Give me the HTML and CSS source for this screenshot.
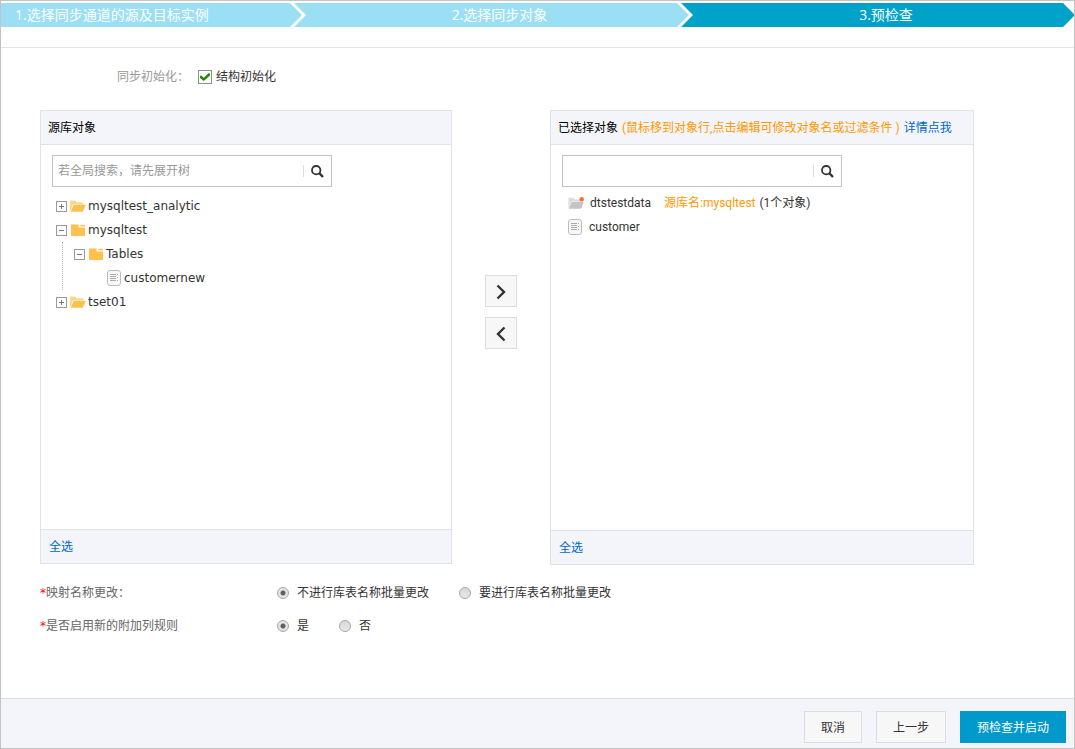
FILE: index.html
```html
<!DOCTYPE html>
<html lang="zh-CN">
<head>
<meta charset="utf-8">
<title>预检查</title>
<meta name="viewport" content="width=device-width, initial-scale=1">
<link rel="stylesheet" href="styles.css">
</head>
<body>
<svg class="sprite" aria-hidden="true">
  <symbol id="i-search" viewBox="0 0 13 13">
    <circle cx="5.2" cy="5.2" r="4.2" fill="none" stroke="#333" stroke-width="1.8"/>
    <path d="M8.2 8.2L12 12" stroke="#333" stroke-width="2.4"/>
  </symbol>
  <symbol id="i-open" viewBox="0 0 16 12">
    <path d="M0 11V1.6Q0 0.6 1 0.6H5L6.6 2.2H12.4Q13.2 2.2 13.2 3V4.2H4.2Q3 4.2 2.5 5.2L0.3 11.2Z" fill="#ffd58a"/>
    <path d="M0.6 11.8L3.4 5.4Q3.7 4.8 4.4 4.8H15.8L13.2 11Q12.9 11.8 12 11.8Z" fill="#ffc04d"/>
  </symbol>
  <symbol id="i-closed" viewBox="0 0 16 12">
    <path d="M1 0.4H8.6V3.6H15V12H1Z" fill="#ffc04d"/>
    <path d="M10.4 0.8H15V2.4H10.4Z" fill="#ffc04d"/>
  </symbol>
  <symbol id="i-db" viewBox="0 0 17 12">
    <path d="M0.4 11V1.6Q0.4 0.8 1.2 0.8H5.4L7 2.4H13.6V4.2H4.2Q3.3 4.2 3 5L0.8 11Z" fill="#dcdcdc"/>
    <path d="M0.8 11.8L3.4 5.4Q3.7 4.8 4.4 4.8H15.8L13.4 11Q13 11.8 12.2 11.8Z" fill="#c4c4c4"/>
    <circle cx="13.7" cy="2.2" r="2.2" fill="#ff6a33"/>
  </symbol>
  <symbol id="i-doc" viewBox="0 0 14 16">
    <rect x="0.5" y="0.5" width="13" height="15" rx="2.5" fill="#f7f7f7" stroke="#bcbcbc"/>
    <path d="M3 4.5H9M3 6.5H9M3 8.5H9M3 10.5H9M10 4.5H11M10 7.5H11M10 10.5H11" stroke="#aaa"/>
  </symbol>
</svg>
<div class="page">
  <header class="header">
    <ol class="steps">
      <li class="step step-first"><span class="step-text">1.选择同步通道的源及目标实例</span>
        <svg class="step-arrow" viewBox="0 0 16 24"><path d="M0 0H4L16 12L4 24H0L12 12Z" fill="#fff"/></svg></li>
      <li class="step"><span class="step-text">2.选择同步对象</span>
        <svg class="step-arrow" viewBox="0 0 16 24"><path d="M0 0H16V24H0Z" fill="#00a2ca"/><path d="M0 0H4L16 12L4 24H0Z" fill="#fff"/><path d="M0 0L12 12L0 24Z" fill="#9bdff5"/></svg></li>
      <li class="step step-current" aria-current="step"><span class="step-text">3.预检查</span>
        <svg class="step-end" viewBox="0 0 11 24"><path d="M0 0L11 11V0ZM0 24L11 13V24Z" fill="#fff"/></svg></li>
    </ol>
  </header>

  <main class="main">
    <div class="init">
      <span class="init-label">同步初始化：</span>
      <label class="choice check-choice"><input class="check" type="checkbox" checked>结构初始化</label>
    </div>

    <div class="transfer">
      <section class="panel">
        <h2 class="panel-head">源库对象</h2>
        <div class="panel-body">
          <div class="search">
            <input class="search-input" type="text" placeholder="若全局搜索，请先展开树" aria-label="搜索源库对象">
            <button class="search-btn" type="button" aria-label="搜索"><svg class="search-icon"><use href="#i-search"/></svg></button>
          </div>
          <ul class="tree">
            <li><div class="node"><button class="toggle plus" type="button" aria-label="展开"></button><svg class="folder"><use href="#i-open"/></svg><span>mysqltest_analytic</span></div></li>
            <li><div class="node"><button class="toggle" type="button" aria-label="收起"></button><svg class="folder"><use href="#i-closed"/></svg><span>mysqltest</span></div>
              <ul class="branch branch-line">
                <li><div class="node"><button class="toggle" type="button" aria-label="收起"></button><svg class="folder"><use href="#i-closed"/></svg><span>Tables</span></div>
                  <ul class="branch">
                    <li><div class="node"><span class="toggle-gap"></span><svg class="doc"><use href="#i-doc"/></svg><span>customernew</span></div></li>
                  </ul>
                </li>
              </ul>
            </li>
            <li><div class="node"><button class="toggle plus" type="button" aria-label="展开"></button><svg class="folder"><use href="#i-open"/></svg><span>tset01</span></div></li>
          </ul>
        </div>
        <div class="panel-foot"><a class="link" href="#">全选</a></div>
      </section>

      <div class="moves">
        <button class="move" type="button" aria-label="添加"><svg class="move-icon" viewBox="0 0 10 16"><path d="M1.5 1.5L8 8L1.5 14.5" fill="none" stroke="#333" stroke-width="2.4"/></svg></button>
        <button class="move" type="button" aria-label="移除"><svg class="move-icon" viewBox="0 0 10 16"><path d="M8.5 1.5L2 8L8.5 14.5" fill="none" stroke="#333" stroke-width="2.4"/></svg></button>
      </div>

      <section class="panel">
        <h2 class="panel-head"><span>已选择对象</span><span class="orange">(鼠标移到对象行,点击编辑可修改对象名或过滤条件 )</span><a class="link" href="#">详情点我</a></h2>
        <div class="panel-body body-selected">
          <div class="search">
            <input class="search-input" type="text" aria-label="搜索已选择对象">
            <button class="search-btn" type="button" aria-label="搜索"><svg class="search-icon"><use href="#i-search"/></svg></button>
          </div>
          <ul class="selected">
            <li class="item"><svg class="db"><use href="#i-db"/></svg><span class="item-name">dtstestdata</span><span class="orange item-source">源库名:mysqltest</span><span>(1个对象)</span></li>
            <li class="item"><svg class="doc"><use href="#i-doc"/></svg><span class="item-name">customer</span></li>
          </ul>
        </div>
        <div class="panel-foot"><a class="link" href="#">全选</a></div>
      </section>
    </div>

    <div class="options">
      <div class="option" role="radiogroup" aria-labelledby="l-map">
        <span class="option-label" id="l-map"><span class="star">*</span>映射名称更改：</span>
        <label class="choice"><input class="radio" type="radio" name="map" checked>不进行库表名称批量更改</label>
        <label class="choice"><input class="radio" type="radio" name="map">要进行库表名称批量更改</label>
      </div>
      <div class="option" role="radiogroup" aria-labelledby="l-rule">
        <span class="option-label" id="l-rule"><span class="star">*</span>是否启用新的附加列规则</span>
        <label class="choice"><input class="radio" type="radio" name="rule" checked>是</label>
        <label class="choice"><input class="radio" type="radio" name="rule">否</label>
      </div>
    </div>
  </main>

  <footer class="footer">
    <button class="btn" type="button">取消</button>
    <button class="btn" type="button">上一步</button>
    <button class="btn btn-primary" type="button">预检查并启动</button>
  </footer>
</div>
</body>
</html>
```

FILE: styles.css
```css
* { box-sizing: border-box; }
body {
  margin: 0;
  background: #fff;
  color: #333;
  font: 12px/18px Roboto, "Noto Sans CJK SC", sans-serif;
}
ul, ol { list-style: none; margin: 0; padding: 0; }
button, input { font: inherit; color: inherit; margin: 0; }
button { padding: 0; cursor: pointer; }
svg { display: block; flex: none; }
.sprite { position: absolute; width: 0; height: 0; }

.page {
  display: flex;
  flex-direction: column;
  min-height: 100vh;
  border: 1px solid #c3c3c3;
}

/* Steps */
.header { padding: 2px 0 20px; border-bottom: 1px solid #e5e5e5; }
.steps {
  display: flex;
  color: #fff;
  font-family: "Open Sans", "Noto Sans CJK SC", sans-serif;
  font-size: 14px;
  line-height: 24px;
}
.step { display: flex; flex: 387 1 0; background: #9bdff5; }
.step-text { flex: 1; padding-left: 16px; text-align: center; white-space: nowrap; }
.step-first { flex-grow: 305; }
.step-first .step-text { padding-left: 14px; text-align: left; }
.step-current { flex-grow: 381; background: #00a2ca; }
.step-arrow { width: 16px; height: 24px; }
.step-end { width: 11px; height: 24px; }

.main { flex: 1; padding: 20px 100px 20px 39px; }

.choice { display: flex; align-items: center; }
.init { display: flex; align-items: center; padding-left: 77px; margin-bottom: 24px; }
.init-label { width: 81px; color: #999; white-space: nowrap; }
.check {
  appearance: none;
  display: grid;
  place-items: center;
  width: 14px;
  height: 14px;
  margin-right: 4px;
  border: 1px solid #8e8f8f;
  background: #fff;
}
.check:checked::before {
  content: "";
  width: 10px;
  height: 8px;
  background: #218a00;
  clip-path: polygon(0 38%, 12% 30%, 38% 58%, 88% 0, 100% 8%, 100% 32%, 38% 100%, 0 62%);
}

/* Transfer panels */
.transfer {
  display: grid;
  grid-template-columns: 412fr 98px 424fr;
  align-items: start;
}
.panel { border: 1px solid #dfe3e8; min-width: 0; }
.panel-head, .panel-foot {
  margin: 0;
  padding: 8px 8px 7px;
  background: #f4f5fa;
  font-size: 12px;
  font-weight: 400;
  color: #000;
}
.panel-head {
  display: flex;
  gap: 4px;
  padding-left: 7px;
  border-bottom: 1px solid #dfe3e8;
  white-space: nowrap;
}
.panel-foot { border-top: 1px solid #dfe3e8; }
.panel-body { min-height: 384px; padding: 10px 11px; }
.body-selected { min-height: 385px; }
.orange { color: #ff9900; }
.link { color: #0066cc; text-decoration: none; }

.search {
  display: flex;
  align-items: center;
  width: 280px;
  max-width: 100%;
  height: 32px;
  border: 1px solid #c3c3c3;
}
.search-input {
  flex: 1;
  min-width: 0;
  padding: 0 5px;
  border: 0;
  outline: 0;
  background: none;
}
.search-input::placeholder { color: #999; opacity: 1; }
.search-btn {
  display: grid;
  place-items: center;
  width: 28px;
  height: 12px;
  border: 0;
  border-left: 1px solid #ddd;
  background: none;
}
.search-icon { width: 13px; height: 13px; }

.tree { padding: 7px 4px; font-family: "DejaVu Sans", sans-serif; }
.node { display: flex; align-items: center; height: 24px; }
.toggle {
  display: grid;
  place-items: center;
  width: 11px;
  height: 11px;
  margin-right: 3px;
  border: 1px solid #999;
  background: linear-gradient(#777, #777) center / 5px 1px no-repeat;
}
.plus {
  background:
    linear-gradient(#777, #777) center / 5px 1px no-repeat,
    linear-gradient(#777, #777) center / 1px 5px no-repeat;
}
.toggle-gap { width: 15px; }
.folder { width: 16px; height: 12px; margin-right: 2px; }
.doc { width: 14px; height: 16px; margin-right: 3px; }
.branch { margin-left: 18px; }
.branch-line { margin-left: 6px; padding-left: 11px; border-left: 1px dotted #bbb; }

.moves { display: grid; justify-content: center; gap: 10px; padding-top: 165px; }
.move {
  display: grid;
  place-items: center;
  width: 32px;
  height: 32px;
  padding-top: 2px;
  border: 1px solid #ddd;
  background: #f7f7f7;
}
.move-icon { width: 10px; height: 16px; }

.selected { padding: 4px 6px; }
.item { display: flex; align-items: center; height: 24px; white-space: nowrap; }
.item .doc { margin-right: 7px; }
.db { width: 17px; height: 12px; margin-right: 5px; }
.item-name { margin-right: 13px; }
.item-source { margin-right: 4px; }

/* Options */
.options { display: grid; gap: 15px; margin-top: 19px; }
.option { display: flex; align-items: center; height: 18px; }
.option .choice { margin-right: 30px; }
.option-label { width: 237px; color: #666; white-space: nowrap; }
.star { color: #f00; font-family: "DejaVu Sans", sans-serif; line-height: 1; }
.radio {
  appearance: none;
  width: 12px;
  height: 12px;
  margin-right: 8px;
  border: 1px solid #a8a8a8;
  border-radius: 50%;
  background: linear-gradient(#d8d8d8, #e8e8e8);
}
.radio:checked { background: radial-gradient(circle, #606060 0 2px, #e4e4e4 3px); }

.footer {
  display: flex;
  justify-content: flex-end;
  gap: 14px;
  padding: 12px 8px 5px;
  border-top: 1px solid #ddd;
  background: #f4f5fa;
}
.btn {
  height: 32px;
  padding: 2px 16px 0;
  border: 1px solid #ddd;
  background: #f7f7f7;
}
.btn-primary { border-color: #0099cc; background: #0099cc; color: #fff; }
```
